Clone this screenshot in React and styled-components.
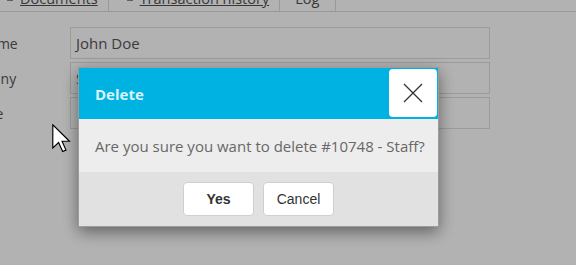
import styled, { createGlobalStyle } from "styled-components";

// Base page
const GlobalStyle = createGlobalStyle`
  html, body {
    margin: 0;
    padding: 0;
    background: #fff;
    overflow: hidden;
  }
  body {
    width: 576px;
    height: 265px;
    font-family: "Open Sans", "Liberation Sans", sans-serif;
    color: #555;
  }
`;

// Page (scrolled a little, so the top and left are clipped)
const Page = styled.div`
  margin: -30px 0 0 -46px;
`;

const TabBar = styled.div`
  display: flex;
  padding-left: 35px;
  border-bottom: 1px solid #dcdcdc;
`;

const Tab = styled.div`
  display: flex;
  align-items: center;
  gap: 4px;
  padding: 19px ${(p) => p.$right || 10}px 2px 15px;
  line-height: 20px;
  font-size: 14.5px;
  border-right: 1px solid #dcdcdc;
  color: #505050;
`;

const TabIcon = styled.span`
  position: relative;
  width: 12px;
  height: 12px;
  &::after {
    content: "";
    position: absolute;
    left: 3px;
    bottom: 4px;
    width: 6px;
    height: 2px;
    background: #888;
  }
`;

const TabLink = styled.span`
  text-decoration: ${(p) => (p.$link ? "underline" : "none")};
`;

const Form = styled.div`
  display: flex;
  flex-direction: column;
  gap: 3px;
  padding-top: 15px;
`;

const Row = styled.div`
  display: flex;
  align-items: center;
`;

const Label = styled.label`
  width: 116px;
  font-size: 14px;
  color: #555;
`;

const Field = styled.div`
  box-sizing: border-box;
  width: 420px;
  height: 32px;
  padding: 0 5px;
  border: 1px solid #dedede;
  display: flex;
  align-items: center;
  font-size: 15px;
  color: #555;
`;

// Modal
const Backdrop = styled.div`
  position: fixed;
  inset: 0;
  background: rgba(0, 0, 0, 0.3);
`;

const Dialog = styled.div`
  position: fixed;
  top: 67px;
  left: 78px;
  width: 361px;
  box-sizing: border-box;
  border: 1px solid #9c9c9c;
  box-shadow: 0 5px 15px rgba(0, 0, 0, 0.45);
  font-family: "Open Sans", "Liberation Sans", sans-serif;
`;

const Header = styled.div`
  height: 51px;
  display: flex;
  justify-content: space-between;
  align-items: center;
  padding: 0 1px 0 16px;
  background: #00b2e2;
`;

const Title = styled.h4`
  margin: 0;
  font-size: 15px;
  font-weight: 700;
  color: #d8f3fb;
`;

const CloseButton = styled.button`
  align-self: flex-start;
  margin-top: 1px;
  width: 48px;
  height: 48px;
  padding: 0;
  border: none;
  border-radius: 4px;
  background: #fff;
  display: flex;
  align-items: center;
  justify-content: center;
  svg {
    display: block;
  }
`;

const Body = styled.div`
  height: 53px;
  display: flex;
  align-items: center;
  padding-left: 16px;
  background: #ededed;
  font-size: 15px;
  color: #686868;
`;

const Footer = styled.div`
  height: 54px;
  display: flex;
  align-items: center;
  justify-content: center;
  gap: 9px;
  background: #e1e1e1;
`;

const Button = styled.button`
  width: 71px;
  height: 34px;
  box-sizing: border-box;
  border: 1px solid #cfcfcf;
  border-radius: 4px;
  background: #fff;
  font-family: "Liberation Sans", Arial, sans-serif;
  font-size: 14px;
  font-weight: ${(p) => (p.$primary ? 700 : 400)};
  color: #333;
`;

const Cursor = styled.svg`
  position: fixed;
  left: 52px;
  top: 124px;
`;

function App() {
  return (
    <>
      <GlobalStyle />
      <Page>
        <TabBar>
          <Tab>
            <TabIcon />
            <TabLink $link>Documents</TabLink>
          </Tab>
          <Tab>
            <TabIcon />
            <TabLink $link>Transaction history</TabLink>
          </Tab>
          <Tab $right={16}>
            <TabLink>Log</TabLink>
          </Tab>
        </TabBar>
        <Form>
          <Row>
            <Label>Full name</Label>
            <Field>John Doe</Field>
          </Row>
          <Row>
            <Label>Company</Label>
            <Field>Staff Solutions</Field>
          </Row>
          <Row>
            <Label>Job title</Label>
            <Field />
          </Row>
        </Form>
      </Page>
      <Backdrop />
      <Dialog>
        <Header>
          <Title>Delete</Title>
          <CloseButton>
            <svg width="20" height="20" viewBox="0 0 20 20">
              <path
                d="M1 1 L19 19 M19 1 L1 19"
                stroke="#333"
                strokeWidth="1.3"
                fill="none"
              />
            </svg>
          </CloseButton>
        </Header>
        <Body>Are you sure you want to delete #10748 - Staff?</Body>
        <Footer>
          <Button $primary>Yes</Button>
          <Button>Cancel</Button>
        </Footer>
      </Dialog>
      <Cursor width="19" height="29" viewBox="0 0 13 20">
        <path
          d="M0.5 0.5 L0.5 16.5 L4.5 12.8 L7.3 19 L9.6 18 L6.9 11.9 L12 11.9 Z"
          fill="#fff"
          stroke="#000"
          strokeWidth="0.8"
          strokeLinejoin="miter"
        />
      </Cursor>
    </>
  );
}

export default App;
